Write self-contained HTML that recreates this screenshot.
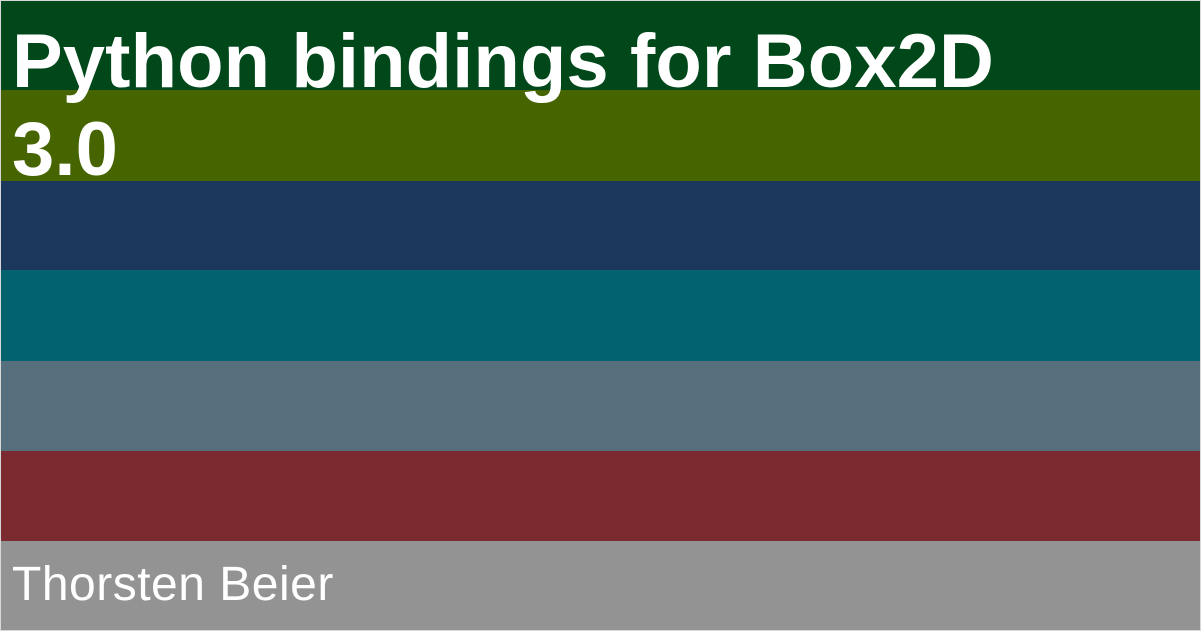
<!DOCTYPE html>
<html><head><style>
html,body{margin:0;padding:0;}
body{width:1201px;height:631px;position:relative;overflow:hidden;font-family:"Liberation Sans",sans-serif;}
.s{position:absolute;left:0;width:1201px;}
.t{position:absolute;left:12px;color:#fff;white-space:nowrap;}
.frame{position:absolute;left:0;top:0;width:1199px;height:629px;border:1px solid #d8d8d8;}
</style></head><body>
<div class="s" style="top:0;height:90px;background:#00481a"></div>
<div class="s" style="top:90px;height:91px;background:#466400"></div>
<div class="s" style="top:181px;height:89px;background:#1b375c"></div>
<div class="s" style="top:270px;height:91px;background:#00636e"></div>
<div class="s" style="top:361px;height:90px;background:#55707c"></div>
<div class="s" style="top:451px;height:90px;background:#7b2a2f"></div>
<div class="s" style="top:541px;height:90px;background:#939393"></div>
<div class="t" style="top:18px;font-size:76px;font-weight:bold;line-height:88px;letter-spacing:0.1px">Python bindings for Box2D<br>3.0</div>
<div class="t" style="top:556px;font-size:48px;line-height:58px;letter-spacing:0.5px">Thorsten Beier</div>
<div class="frame"></div>
</body></html>
